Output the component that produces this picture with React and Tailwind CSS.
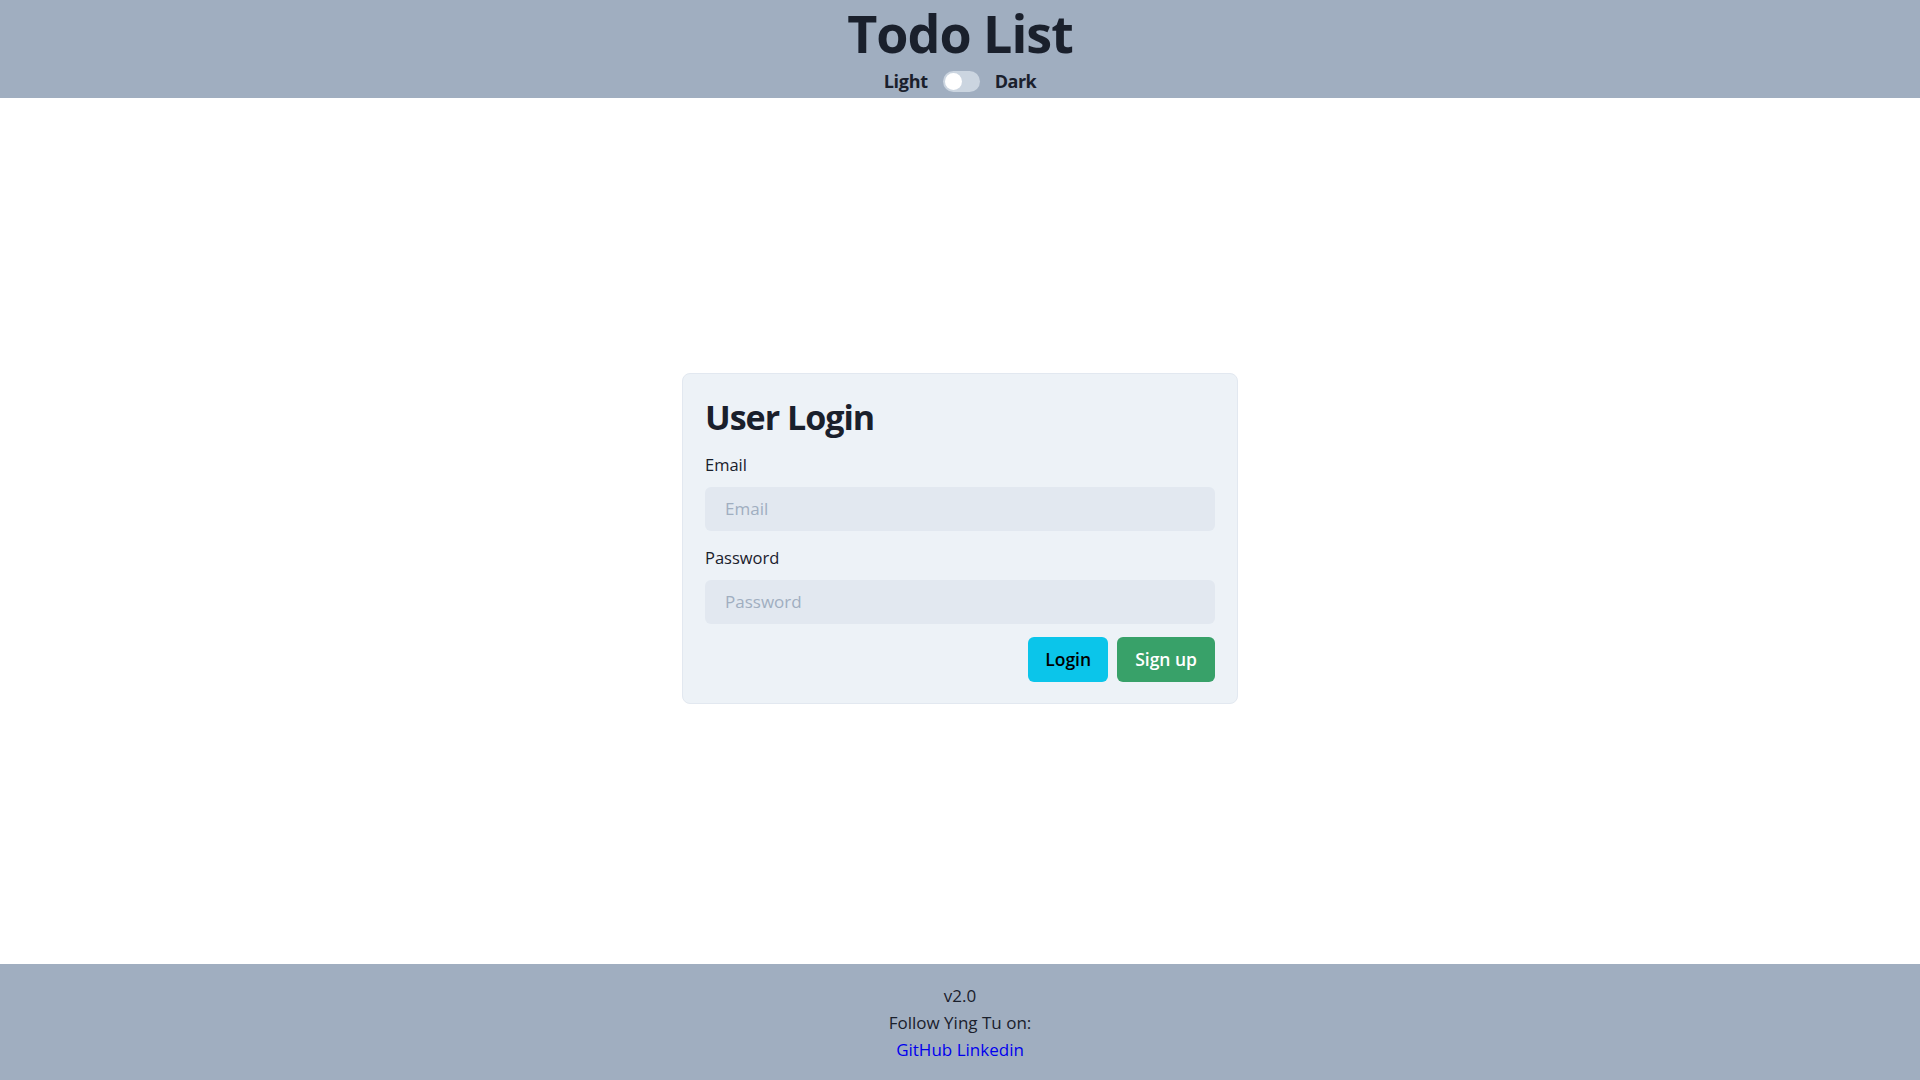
import { useState } from "react";

const font = { fontFamily: '"Open Sans", "Noto Sans", sans-serif' };

const Toggle = ({ on, setOn }) => {
  return (
    <button
      onClick={() => setOn(!on)}
      className={`w-[37px] h-[21px] rounded-full p-[2px] flex items-center ${
        on ? "bg-[#319795]" : "bg-[#cbd5e0]"
      }`}
    >
      <span
        className={`block w-[17px] h-[17px] rounded-full bg-white ${
          on ? "translate-x-[16px]" : ""
        }`}
      />
    </button>
  );
};

const Field = ({ label, type, placeholder }) => (
  <div className="flex flex-col">
    <label className="text-[16.5px] leading-[24px] text-[#1a202c] mb-[10px]">
      {label}
    </label>
    <input
      type={type}
      placeholder={placeholder}
      className="h-[44px] w-full rounded-[6px] bg-[#e2e8f0] px-[20px] text-[17px] text-[#1a202c] placeholder:text-[#a0aec0] outline-none"
    />
  </div>
);

export default function App() {
  const [dark, setDark] = useState(false);

  return (
    <div style={font} className="min-h-screen flex flex-col bg-white text-[#1a202c]">
      <header className="h-[98px] bg-[#a0aec0] flex flex-col items-center">
        <h1 className="text-[52px] leading-[62px] font-bold tracking-[-1px] mt-[2px]">
          Todo List
        </h1>
        <div className="flex items-center gap-[15px] mt-[4px]">
          <span className="text-[18px] font-bold tracking-[-0.3px]">Light</span>
          <Toggle on={dark} setOn={setDark} />
          <span className="text-[18px] font-bold tracking-[-0.5px]">Dark</span>
        </div>
      </header>

      <main className="flex-1 flex items-center justify-center pt-[14px]">
        <div className="w-[556px] rounded-[8px] border border-[#e2e8f0] bg-[#edf2f7] px-[22px] pt-[22px] pb-[21px]">
          <h2 className="text-[34px] leading-[43px] font-bold tracking-[-1px] mb-[14px]">
            User Login
          </h2>
          <div className="flex flex-col gap-[15px]">
            <Field label="Email" type="email" placeholder="Email" />
            <Field label="Password" type="password" placeholder="Password" />
          </div>
          <div className="flex justify-end gap-[9px] mt-[13px]">
            <button className="h-[45px] px-[17px] rounded-[6px] bg-[#0bc5ea] text-black text-[17.5px] font-semibold">
              Login
            </button>
            <button className="h-[45px] px-[18px] rounded-[6px] bg-[#38a169] text-white text-[17.5px] font-semibold">
              Sign up
            </button>
          </div>
        </div>
      </main>

      <footer className="h-[116px] bg-[#a0aec0] flex flex-col items-center justify-center text-[17px] leading-[27px] text-[#1a202c]">
        <p>v2.0</p>
        <p>Follow Ying Tu on:</p>
        <p>
          <a href="#" className="text-[#0000ee]">GitHub</a>{" "}
          <a href="#" className="text-[#0000ee]">Linkedin</a>
        </p>
      </footer>
    </div>
  );
}
